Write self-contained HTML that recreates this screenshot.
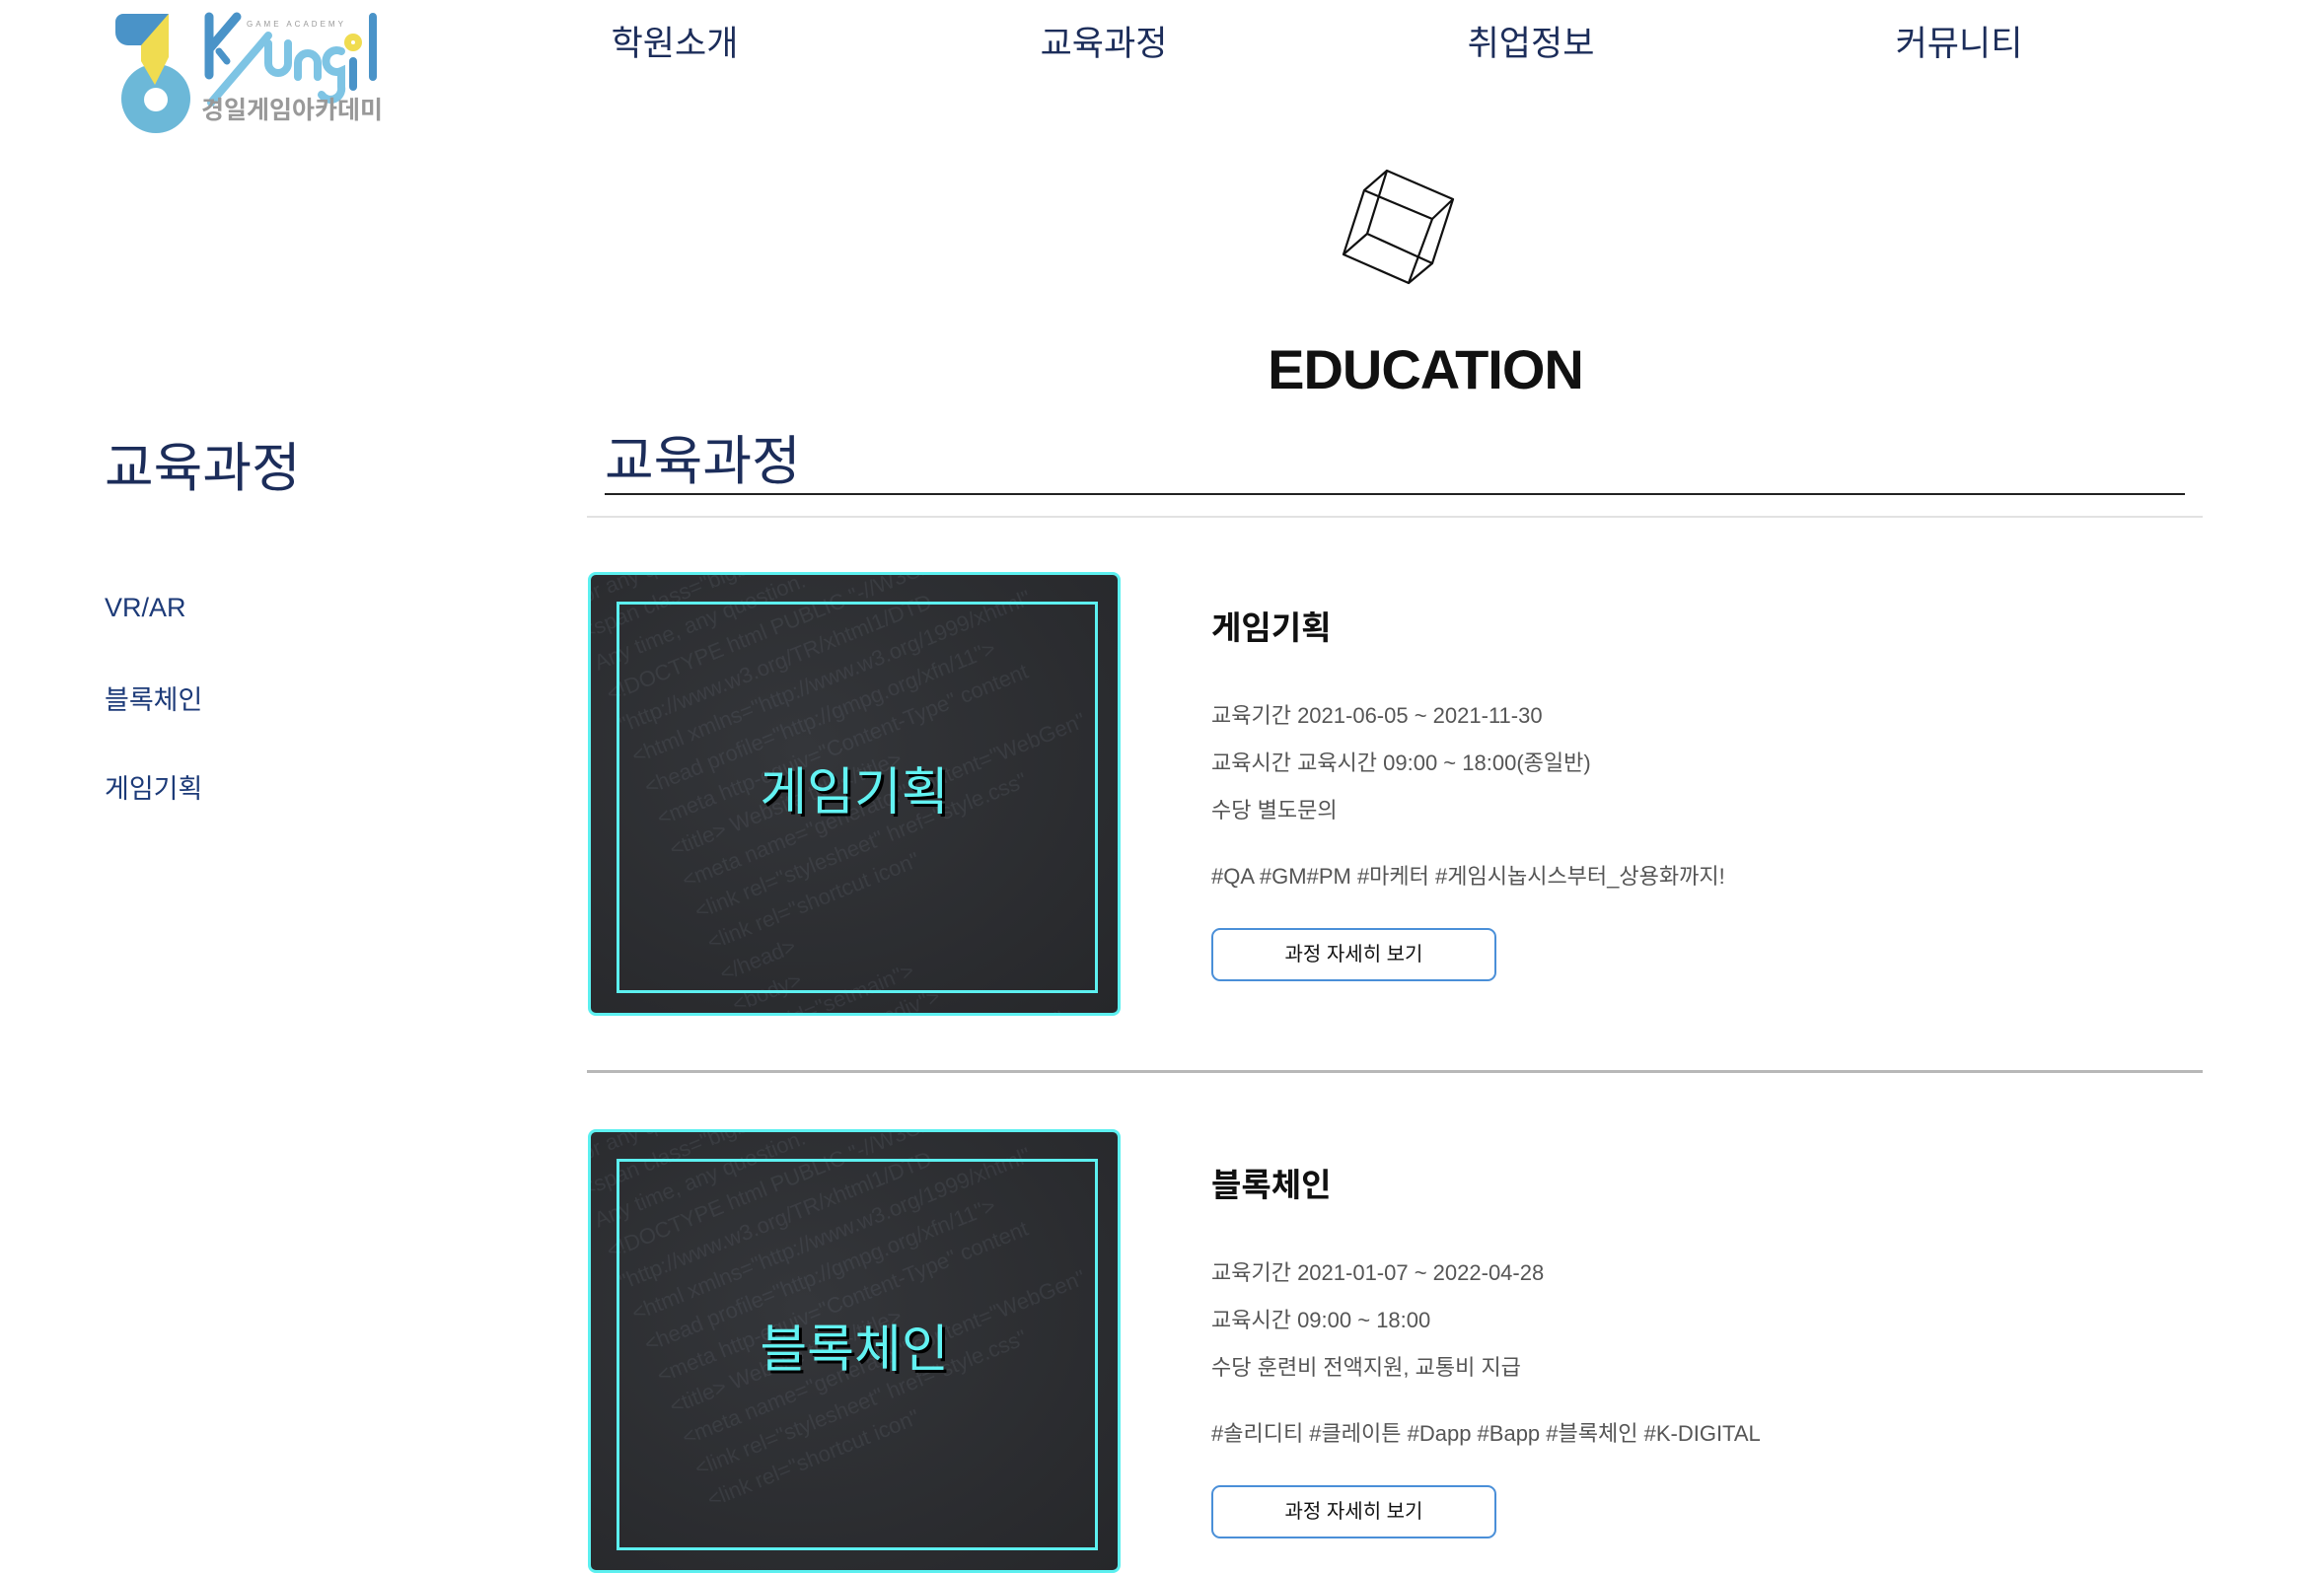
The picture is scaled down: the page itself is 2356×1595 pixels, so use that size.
<!DOCTYPE html>
<html><head><meta charset="utf-8"><style>
*{margin:0;padding:0;box-sizing:border-box}
body{width:2356px;height:1528px;overflow:hidden;background:#fff;position:relative;font-family:"Liberation Sans","Noto Sans CJK KR",sans-serif}
.a{position:absolute;white-space:nowrap}
.nav{font-size:35px;color:#1c2d5a;top:16px;transform:translateX(-50%)}
.side{font-size:27px;color:#1c3a78;left:106px}
.card{position:absolute;left:596px;width:540px;height:450px;border:3px solid #5cf0f0;border-radius:8px;background:radial-gradient(ellipse at 40% 40%,#34363a,#26272a);overflow:hidden}
.card .in{position:absolute;left:26px;top:27px;width:488px;height:397px;border:3px solid #5cf0f0}
.card .t{position:absolute;left:0;right:0;top:178px;text-align:center;font-size:52px;color:#62f2f2;text-shadow:3px 3px 0 #000}
.code{position:absolute;left:-40px;top:-20px;font-family:"Liberation Sans",sans-serif;font-size:22px;line-height:34px;color:rgba(150,160,170,.12);transform:rotate(-22deg);transform-origin:0 0;white-space:pre}
.ti{font-size:33px;font-weight:bold;color:#111;left:1228px}
.ln{font-size:22px;color:#555;left:1228px}
.btn{position:absolute;left:1228px;width:289px;height:54px;border:2px solid #4a8fd8;border-radius:9px;font-size:20px;color:#111;text-align:center;line-height:50px}
</style></head><body>
<svg class="a" style="left:0;top:0" width="400" height="150" viewBox="0 0 400 150">
<path d="M117 22 a8 8 0 0 1 8 -8 H171 L147 46 H130 a13 13 0 0 1 -13 -13Z" fill="#4a93c8"/>
<circle cx="158" cy="100" r="35" fill="#6cb8d8"/><circle cx="158" cy="101" r="12" fill="#fff"/>
<polygon points="171,14 171,58 157,86 143,62 143,46" fill="#f0dc50"/>
<path d="M212 17 V76 M212 50 L240 17" stroke="#4a93c8" stroke-width="9" stroke-linecap="round"/>
<path d="M222 52 L230 62" stroke="#4a93c8" stroke-width="7" stroke-linecap="round"/>
<path d="M214 104 L272 36" stroke="#7ec4e4" stroke-width="8" stroke-linecap="round"/>
<text x="250" y="27" font-size="8" fill="#999" font-family="Liberation Sans" letter-spacing="3">GAME ACADEMY</text>
<path d="M272 44 v20 a10 10 0 0 0 20 0 v-20 M302 78 v-14 a10 10 0 0 1 20 0 v14 M346 52 a11 11 0 1 0 0 20 V88 a11 11 0 0 1 -20 8" stroke="#7ec4e4" stroke-width="8" fill="none" stroke-linecap="round"/>
<circle cx="358" cy="43" r="9" fill="#f0dc50"/><circle cx="358" cy="43" r="2" fill="#fff"/>
<path d="M358 62 V88 M378 17 V78" stroke="#4a93c8" stroke-width="8" stroke-linecap="round"/>
<text x="204" y="120" font-size="25" font-weight="bold" fill="#999" font-family="Noto Sans CJK KR">경일게임아카데미</text>
</svg>
<div class="a nav" style="left:684px">학원소개</div>
<div class="a nav" style="left:1119px">교육과정</div>
<div class="a nav" style="left:1552px">취업정보</div>
<div class="a nav" style="left:1986px">커뮤니티</div>
<svg class="a" style="left:0;top:0" width="1600" height="320" fill="none" stroke="#111" stroke-width="2.2" stroke-linejoin="round">
<path d="M1383 193 L1452 222 L1428 287 L1362 258 Z"/>
<path d="M1406 173 L1473 202 L1452 267 L1386 237 Z"/>
<path d="M1383 193 L1406 173 M1452 222 L1473 202 M1428 287 L1452 267 M1362 258 L1386 237"/>
</svg>
<div class="a" style="left:0;width:2890px;text-align:center;top:342px;font-size:56px;font-weight:bold;color:#111;letter-spacing:-1px">EDUCATION</div>
<div class="a" style="left:106px;top:430px;font-size:54px;color:#1c2d5a">교육과정</div>
<div class="a" style="left:613px;top:423px;font-size:54px;color:#1c2d5a">교육과정</div>
<div class="a" style="left:613px;top:500px;width:1602px;height:2px;background:#222"></div>
<div class="a" style="left:595px;top:523px;width:1638px;height:2px;background:#e2e2e2"></div>
<div class="a side" style="top:601px">VR/AR</div>
<div class="a side" style="top:688px">블록체인</div>
<div class="a side" style="top:778px">게임기획</div>
<div class="card" style="top:580px"><div class="code">&lt;div class="mnl_phone"&gt;
For any questions call&lt;br&gt;
&lt;span class="bigbluet"&gt;(877) 987-65
Any time, any question.
&lt;!DOCTYPE html PUBLIC "-//W3C//DTD
"http://www.w3.org/TR/xhtml1/DTD
&lt;html xmlns="http://www.w3.org/1999/xhtml"
&lt;head profile="http://gmpg.org/xfn/11"&gt;
&lt;meta http-equiv="Content-Type" content
&lt;title&gt; Website title&lt;/title&gt;
&lt;meta name="generator" content="WebGen"
&lt;link rel="stylesheet" href="style.css"
&lt;link rel="shortcut icon"
&lt;/head&gt;
&lt;body&gt;
&lt;div id="setmain"&gt;
&lt;div class="topdiv"&gt;
&lt;div id="flashlogo"&gt;
&lt;object type="application/flash"
width="409" height="112"&gt;</div><div class="in"></div><div class="t">게임기획</div></div>
<div class="a ti" style="top:610px">게임기획</div>
<div class="a ln" style="top:708px">교육기간 2021-06-05 ~ 2021-11-30</div>
<div class="a ln" style="top:756px">교육시간 교육시간 09:00 ~ 18:00(종일반)</div>
<div class="a ln" style="top:804px">수당 별도문의</div>
<div class="a ln" style="top:871px">#QA #GM#PM #마케터 #게임시놉시스부터_상용화까지!</div>
<div class="btn" style="top:941px">과정 자세히 보기</div>
<div class="a" style="left:595px;top:1085px;width:1638px;height:3px;background:#b8b8b8"></div>
<div class="card" style="top:1145px"><div class="code">&lt;div class="mnl_phone"&gt;
For any questions call&lt;br&gt;
&lt;span class="bigbluet"&gt;(877) 987-65
Any time, any question.
&lt;!DOCTYPE html PUBLIC "-//W3C//DTD
"http://www.w3.org/TR/xhtml1/DTD
&lt;html xmlns="http://www.w3.org/1999/xhtml"
&lt;head profile="http://gmpg.org/xfn/11"&gt;
&lt;meta http-equiv="Content-Type" content
&lt;title&gt; Website title&lt;/title&gt;
&lt;meta name="generator" content="WebGen"
&lt;link rel="stylesheet" href="style.css"
&lt;link rel="shortcut icon"</div><div class="in"></div><div class="t">블록체인</div></div>
<div class="a ti" style="top:1175px">블록체인</div>
<div class="a ln" style="top:1273px">교육기간 2021-01-07 ~ 2022-04-28</div>
<div class="a ln" style="top:1321px">교육시간 09:00 ~ 18:00</div>
<div class="a ln" style="top:1369px">수당 훈련비 전액지원, 교통비 지급</div>
<div class="a ln" style="top:1436px">#솔리디티 #클레이튼 #Dapp #Bapp #블록체인 #K-DIGITAL</div>
<div class="btn" style="top:1506px">과정 자세히 보기</div>
</body></html>
